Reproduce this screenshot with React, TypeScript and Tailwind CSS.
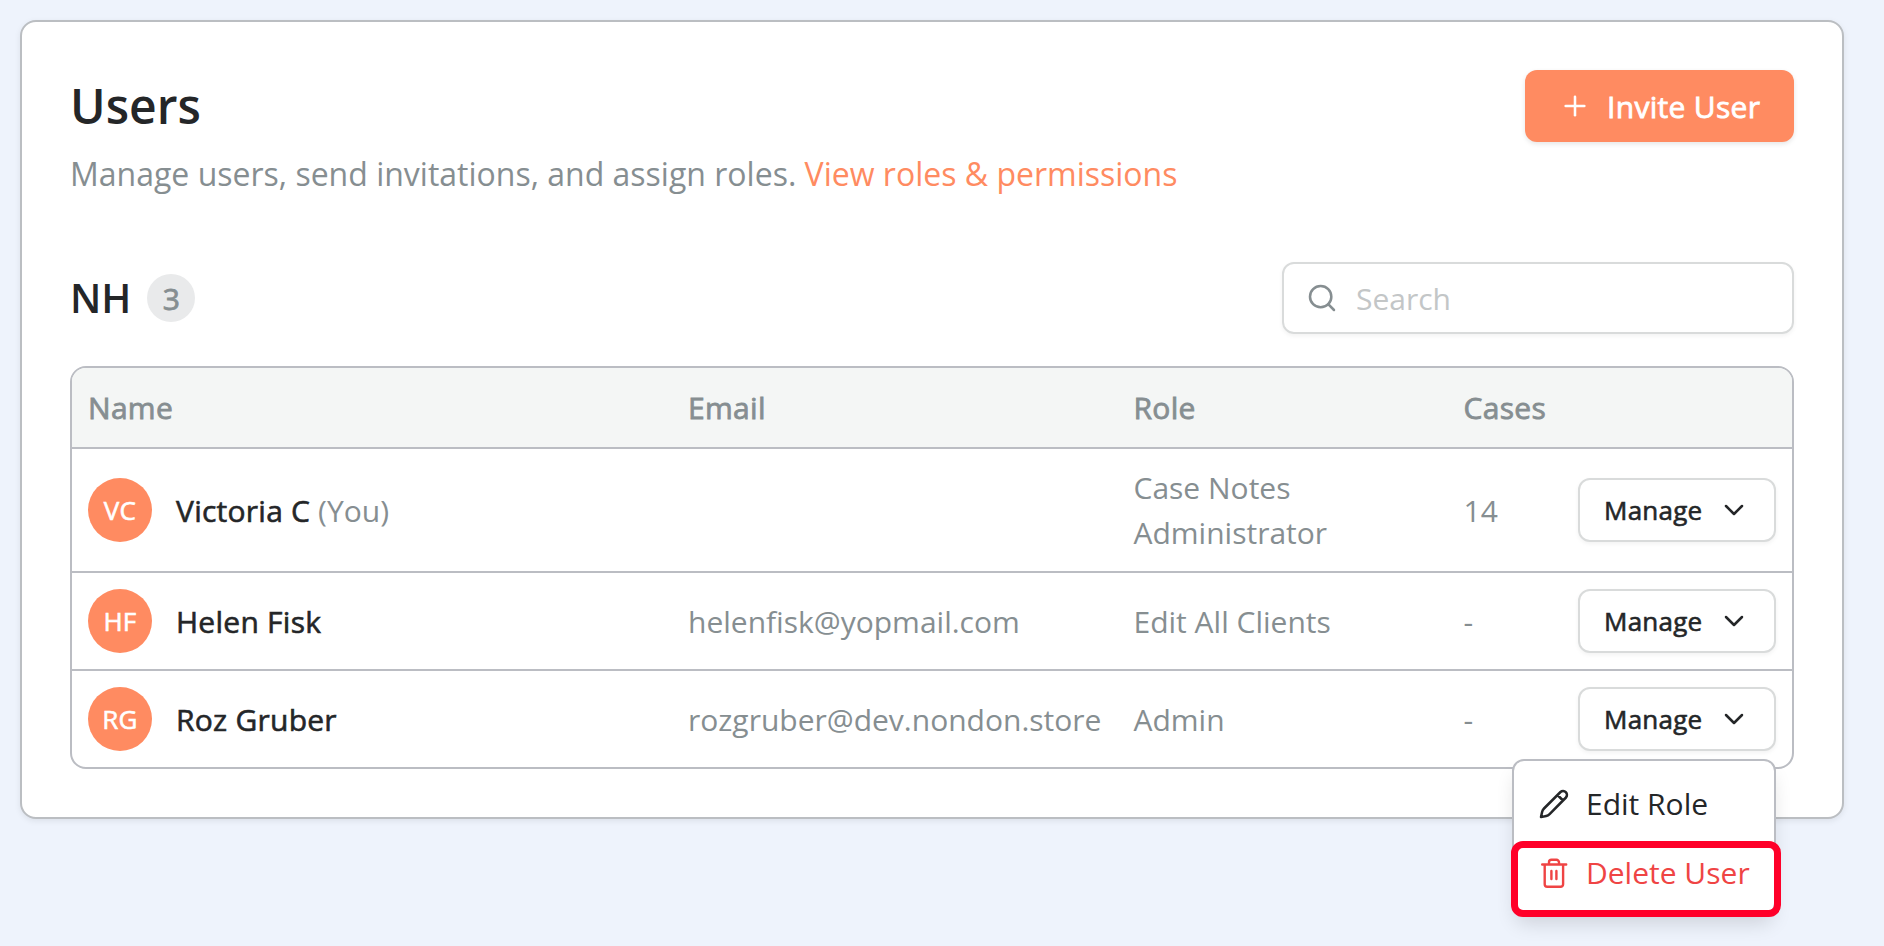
import { ChevronDown, Plus, Search } from "lucide-react";

const users = [
    { initials: "VC", name: "Victoria C", you: true, email: "", role: "Case Notes Administrator", cases: "14", row: "h-[122px]" },
    { initials: "HF", name: "Helen Fisk", you: false, email: "helenfisk@yopmail.com", role: "Edit All Clients", cases: "-", row: "h-[96px]" },
    { initials: "RG", name: "Roz Gruber", you: false, email: "rozgruber@dev.nondon.store", role: "Admin", cases: "-", row: "h-[96px]" },
];

const columns = "grid grid-cols-[600px_445.5px_330px_114.5px_1fr] items-center";

// Open Sans has no 500 weight here, so thicken the regular one
const medium = "[-webkit-text-stroke:0.6px_currentColor] tracking-[0.25px]";
const mediumBold = "[-webkit-text-stroke:0.8px_currentColor] tracking-[0.3px]";

const PencilIcon = () => (
    <svg width="32" height="32" viewBox="0 0 32 32" fill="none" stroke="currentColor" strokeWidth="2.5" strokeLinecap="round" strokeLinejoin="round">
        <path d="M19.5 8 6 21.5c-1 1-1.6 2-1.9 3.4L3 30.1l5.2-1.1c1.4-.3 2.400-.9 3.400-1.900L25 13.500M19.500 8l3-3a3.900 3.900 0 0 1 5.500 5.500l-3 3M19.500 8l5.500 5.500" />
    </svg>
);

const TrashIcon = () => (
    <svg width="32" height="32" viewBox="0 0 32 32" fill="none" stroke="currentColor" strokeWidth="2.4" strokeLinecap="round" strokeLinejoin="round" className="overflow-visible">
        <path d="M4.200 8.500h24M6.700 8.500v19.800a2.500 2.500 0 0 0 2.500 2.500h13.400a2.500 2.500 0 0 0 2.500-2.500V8.500M11 8.500V6.300a2.500 2.500 0 0 1 2.500-2.500h5a2.500 2.500 0 0 1 2.500 2.500v2.200M13.400 15v8M18.400 15v8" />
    </svg>
);

const ManageButton = () => (
    <button className="flex items-center justify-between h-[64px] w-[198px] px-6 rounded-xl border-2 border-[#d9dbdb] bg-white text-[26px] shadow-[0_2px_4px_rgba(0,0,0,0.05)]">
        <span className={medium}>Manage</span>
        <ChevronDown size={32} strokeWidth={1.9} />
    </button>
);

const Menu = () => (
    <div className="absolute right-0 top-[72px] z-10 w-[264px] h-[156px] rounded-xl border-2 border-[#bbbdc3] bg-white shadow-[0_12px_20px_-4px_rgba(0,0,0,0.14)] text-[30px]">
        <div className="flex items-center gap-4 h-[84px] pl-6 text-[#242628]">
            <PencilIcon />
            Edit Role
        </div>
        <div className="flex items-center gap-4 h-[54px] pl-6 text-[#ef4444]">
            <TrashIcon />
            Delete User
        </div>
        <div className="absolute left-[-3px] top-[80px] w-[270px] h-[76px] rounded-xl border-[7px] border-[#ff0029]" />
    </div>
);

const App = () => {
    return (
        <div className="h-[946px] w-[1884px] overflow-hidden bg-[#eef3fc] p-5 text-[#242628] font-['Open_Sans',sans-serif]">
            <div className="w-[1824px] h-[799px] rounded-2xl border-2 border-[#bbbec2] bg-white px-12 pt-12 shadow-[0_2px_6px_rgba(0,0,0,0.08)]">
                <div className="flex justify-between items-start">
                    <div>
                        <h1 className="text-[48px] leading-[72px] font-semibold">Users</h1>
                        <p className="text-[32px] leading-[64px] text-[#868e91]">
                            Manage users, send invitations, and assign roles. <a className="text-[#ff8b61]">View roles &amp; permissions</a>
                        </p>
                    </div>
                    <button className="flex items-center gap-4 h-[72px] w-[269px] pl-[34px] rounded-xl bg-[#ff8b61] text-white text-[30px] shadow-[0_2px_5px_rgba(0,0,0,0.1)]">
                        <Plus size={32} strokeWidth={1.9} />
                        <span className={mediumBold}>Invite User</span>
                    </button>
                </div>

                <div className="flex justify-between items-center mt-[56px]">
                    <div className="flex items-center gap-4">
                        <h2 className="text-[40px] font-semibold">NH</h2>
                        <span className={`${mediumBold} flex items-center justify-center size-12 rounded-full bg-[#e9eaeb] text-[#868e91] text-[30px]`}>3</span>
                    </div>
                    <div className="flex items-center gap-[18px] h-[72px] w-[512px] pl-[22px] rounded-xl border-2 border-[#d9dbdb] shadow-[0_2px_4px_rgba(0,0,0,0.05)]">
                        <Search size={32} strokeWidth={1.9} className="text-[#868e91]" />
                        <span className="text-[30px] text-[#c3c6c7]">Search</span>
                    </div>
                </div>

                <div className="mt-8 w-[1724px] rounded-2xl border-2 border-[#bbbdc3] text-[30px] text-[#868e91]">
                    <div className={`${columns} ${mediumBold} h-[79px] rounded-t-[14px] bg-[#f4f6f5] pl-4`}>
                        <span>Name</span>
                        <span>Email</span>
                        <span>Role</span>
                        <span>Cases</span>
                    </div>
                    {users.map((user, i) => (
                        <div key={user.initials} className={`${columns} ${user.row} box-content border-t-2 border-[#bbbdc3] pl-4`}>
                            <div className="flex items-center gap-6">
                                <span className={`${medium} flex items-center justify-center size-16 rounded-full bg-[#ff8b61] text-white text-[26px]`}>{user.initials}</span>
                                <span>
                                    <span className={`${medium} text-[#242628]`}>{user.name}</span> {user.you && "(You)"}
                                </span>
                            </div>
                            <span>{user.email}</span>
                            <span className="w-[260px] leading-[45px]">{user.role}</span>
                            <span>{user.cases}</span>
                            <div className="relative w-[198px] text-[#242628]">
                                <ManageButton />
                                {i === 2 && <Menu />}
                            </div>
                        </div>
                    ))}
                </div>
            </div>
        </div>
    );
};

export default App;
